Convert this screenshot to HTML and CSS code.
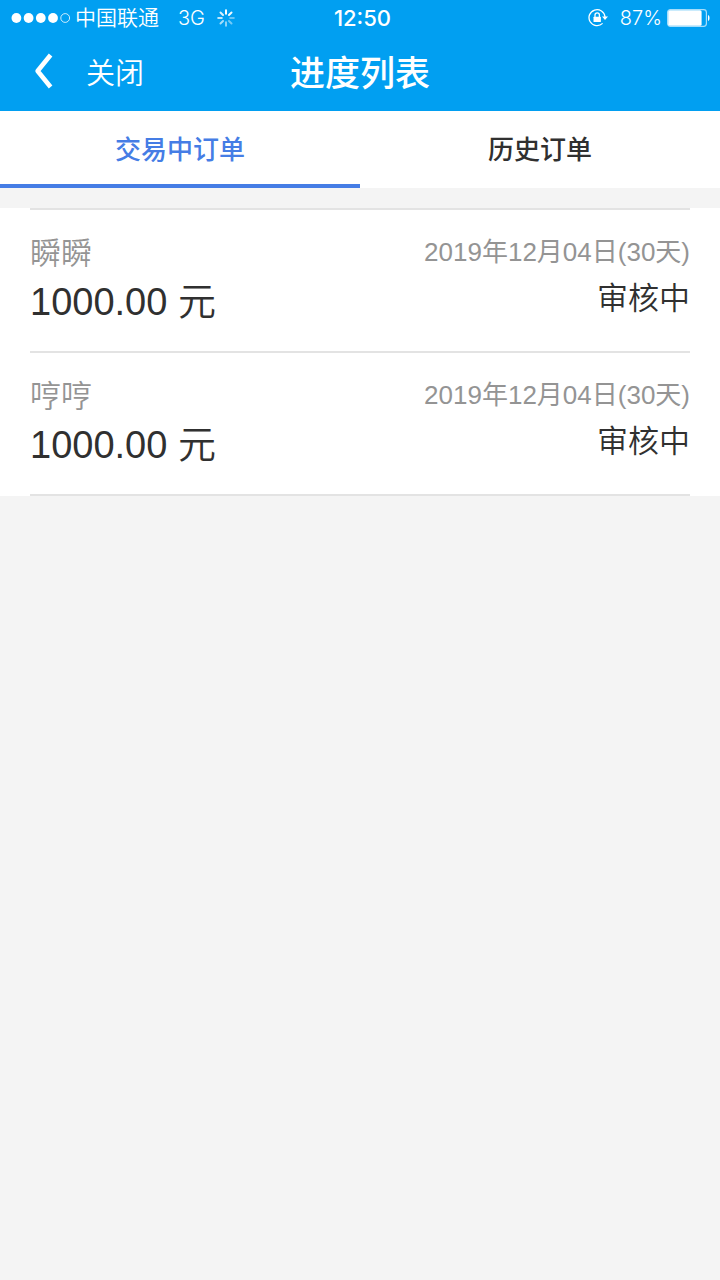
FILE: index.html
```
<!DOCTYPE html>
<html lang="zh-CN">
<head>
<meta charset="utf-8">
<meta name="viewport" content="width=device-width, initial-scale=1">
<title>进度列表</title>
<link rel="stylesheet" href="styles.css">
</head>
<body>
<header class="header">
  <div class="status-bar">
    <div class="status-left">
      <svg class="signal" width="60" height="12" viewBox="0 0 60 12" aria-hidden="true">
        <g fill="#fff"><circle cx="5.4" cy="6" r="4.9"/><circle cx="17.6" cy="6" r="4.9"/><circle cx="29.8" cy="6" r="4.9"/><circle cx="42" cy="6" r="4.9"/></g>
        <circle cx="54.2" cy="6" r="4.4" fill="none" stroke="#fff" stroke-opacity=".8"/>
      </svg>
      <span class="carrier">中国联通</span>
      <span class="network">3G</span>
      <svg class="spinner" width="18" height="18" viewBox="-9 -9 18 18" stroke="#fff" stroke-width="2" stroke-linecap="round" aria-hidden="true">
        <path d="M0-4.2V-7.8"/>
        <path d="M0-4.2V-7.8" transform="rotate(45)" opacity=".95"/>
        <path d="M0-4.2V-7.8" transform="rotate(90)" opacity=".4"/>
        <path d="M0-4.2V-7.8" transform="rotate(135)" opacity=".45"/>
        <path d="M0-4.2V-7.8" transform="rotate(180)" opacity=".55"/>
        <path d="M0-4.2V-7.8" transform="rotate(225)" opacity=".65"/>
        <path d="M0-4.2V-7.8" transform="rotate(270)" opacity=".75"/>
        <path d="M0-4.2V-7.8" transform="rotate(315)" opacity=".85"/>
      </svg>
    </div>
    <span class="clock">12:50</span>
    <div class="status-right">
      <svg class="lock" width="20" height="20" viewBox="0 0 20 20" fill="none" stroke="#fff" stroke-width="1.3" aria-hidden="true">
        <path d="M14.6 15.4A8 8 0 1 1 17 9"/>
        <path d="M14 8.4h6l-3 3.6z" fill="#fff" stroke="none"/>
        <rect x="5.5" y="8.7" width="7.4" height="5.3" rx=".5" fill="#fff" stroke="none"/>
        <path d="M7 9V7a2.2 2.2 0 0 1 4.4 0v2"/>
      </svg>
      <span class="percent">87%</span>
      <svg class="battery" width="43" height="18" viewBox="0 0 43 18" aria-hidden="true">
        <rect x=".6" y=".6" width="38.8" height="16.8" rx="2.8" fill="none" stroke="#fff" stroke-opacity=".65" stroke-width="1.2"/>
        <rect x="1.2" y="1.2" width="33.4" height="15.6" rx="1.6" fill="#fff"/>
        <path d="M41 6c2 .6 2 5.4 0 6z" fill="#fff"/>
      </svg>
    </div>
  </div>
  <nav class="nav-bar">
    <div class="nav-actions">
      <button class="back" type="button" aria-label="返回">
        <svg width="19" height="36" viewBox="0 0 19 36" fill="none" stroke="#fff" stroke-width="4.6" stroke-linejoin="round" aria-hidden="true"><path d="M16.6 2L3.6 18l13 16"/></svg>
      </button>
      <button class="close" type="button">关闭</button>
    </div>
    <h1 class="title">进度列表</h1>
  </nav>
</header>
<main>
  <div class="tabs" role="tablist">
    <button class="tab tab-active" type="button" role="tab" aria-selected="true">交易中订单</button>
    <button class="tab" type="button" role="tab" aria-selected="false">历史订单</button>
  </div>
  <section class="orders">
    <ul class="order-list">
      <li class="order">
        <div class="order-main">
          <span class="name">瞬瞬</span>
          <span class="amount">1000.00 元</span>
        </div>
        <div class="order-side">
          <span class="date">2019年12月04日(30天)</span>
          <span class="state">审核中</span>
        </div>
      </li>
      <li class="order">
        <div class="order-main">
          <span class="name">哼哼</span>
          <span class="amount">1000.00 元</span>
        </div>
        <div class="order-side">
          <span class="date">2019年12月04日(30天)</span>
          <span class="state">审核中</span>
        </div>
      </li>
    </ul>
  </section>
</main>
</body>
</html>
```
FILE: styles.css
```
* { box-sizing: border-box; }

body {
  margin: 0;
  background: #f4f4f4;
  color: #303030;
  font-family: "Liberation Sans", "Noto Sans CJK SC", sans-serif;
}

button {
  margin: 0;
  padding: 0;
  border: 0;
  background: none;
  color: inherit;
  font: inherit;
}

svg { display: block; }

.header {
  background: #019ff1;
  color: #fff;
}

.status-bar {
  display: grid;
  grid-template-columns: 1fr auto 1fr;
  align-items: center;
  height: 36px;
  padding: 0 10px 0 11px;
  font-family: Inter, "Noto Sans CJK SC", sans-serif;
  font-size: 20px;
  font-weight: 300;
}

.status-left,
.status-right {
  display: flex;
  align-items: center;
}

.status-right { justify-content: flex-end; }

.carrier {
  margin-left: 4px;
  font-size: 21px;
  font-weight: 350;
  line-height: 24px;
}

.network { margin-left: 19px; }
.spinner { margin-left: 12px; }

.clock {
  padding-left: 4px;
  font-size: 22px;
  font-weight: 500;
}

.percent { margin: 0 5px 0 12px; }

.nav-bar {
  display: grid;
  grid-template-columns: 1fr auto 1fr;
  align-items: center;
  height: 75px;
  padding: 0 34px 6px;
}

.nav-actions {
  display: flex;
  align-items: center;
  gap: 33px;
}

.close {
  font-size: 29px;
  font-weight: 350;
}

.title {
  margin: 0;
  font-size: 35px;
  font-weight: 500;
}

.tabs {
  display: grid;
  grid-template-columns: 1fr 1fr;
  background: #fff;
}

.tab {
  height: 77px;
  border-bottom: 4px solid transparent;
  font-size: 26px;
  font-weight: 500;
}

.tab-active {
  border-color: #457de5;
  color: #457de5;
}

.orders {
  margin-top: 20px;
  padding: 0 30px;
  background: #fff;
}

.order-list {
  margin: 0;
  padding: 0;
  border-top: 2px solid #e3e3e3;
  list-style: none;
}

.order {
  display: flex;
  justify-content: space-between;
  padding: 20px 0 25px;
  border-bottom: 2px solid #e3e3e3;
}

.order-main,
.order-side {
  display: flex;
  flex-direction: column;
}

.order-side { align-items: flex-end; }

.name,
.date { color: #949494; }

.name {
  font-size: 31px;
  font-weight: 350;
  line-height: 48px;
}

.date {
  font-size: 26px;
  line-height: 44px;
}

.amount {
  font-size: 38px;
  font-weight: 350;
  line-height: 48px;
}

.state {
  font-size: 31px;
  font-weight: 350;
  line-height: 50px;
}
```
